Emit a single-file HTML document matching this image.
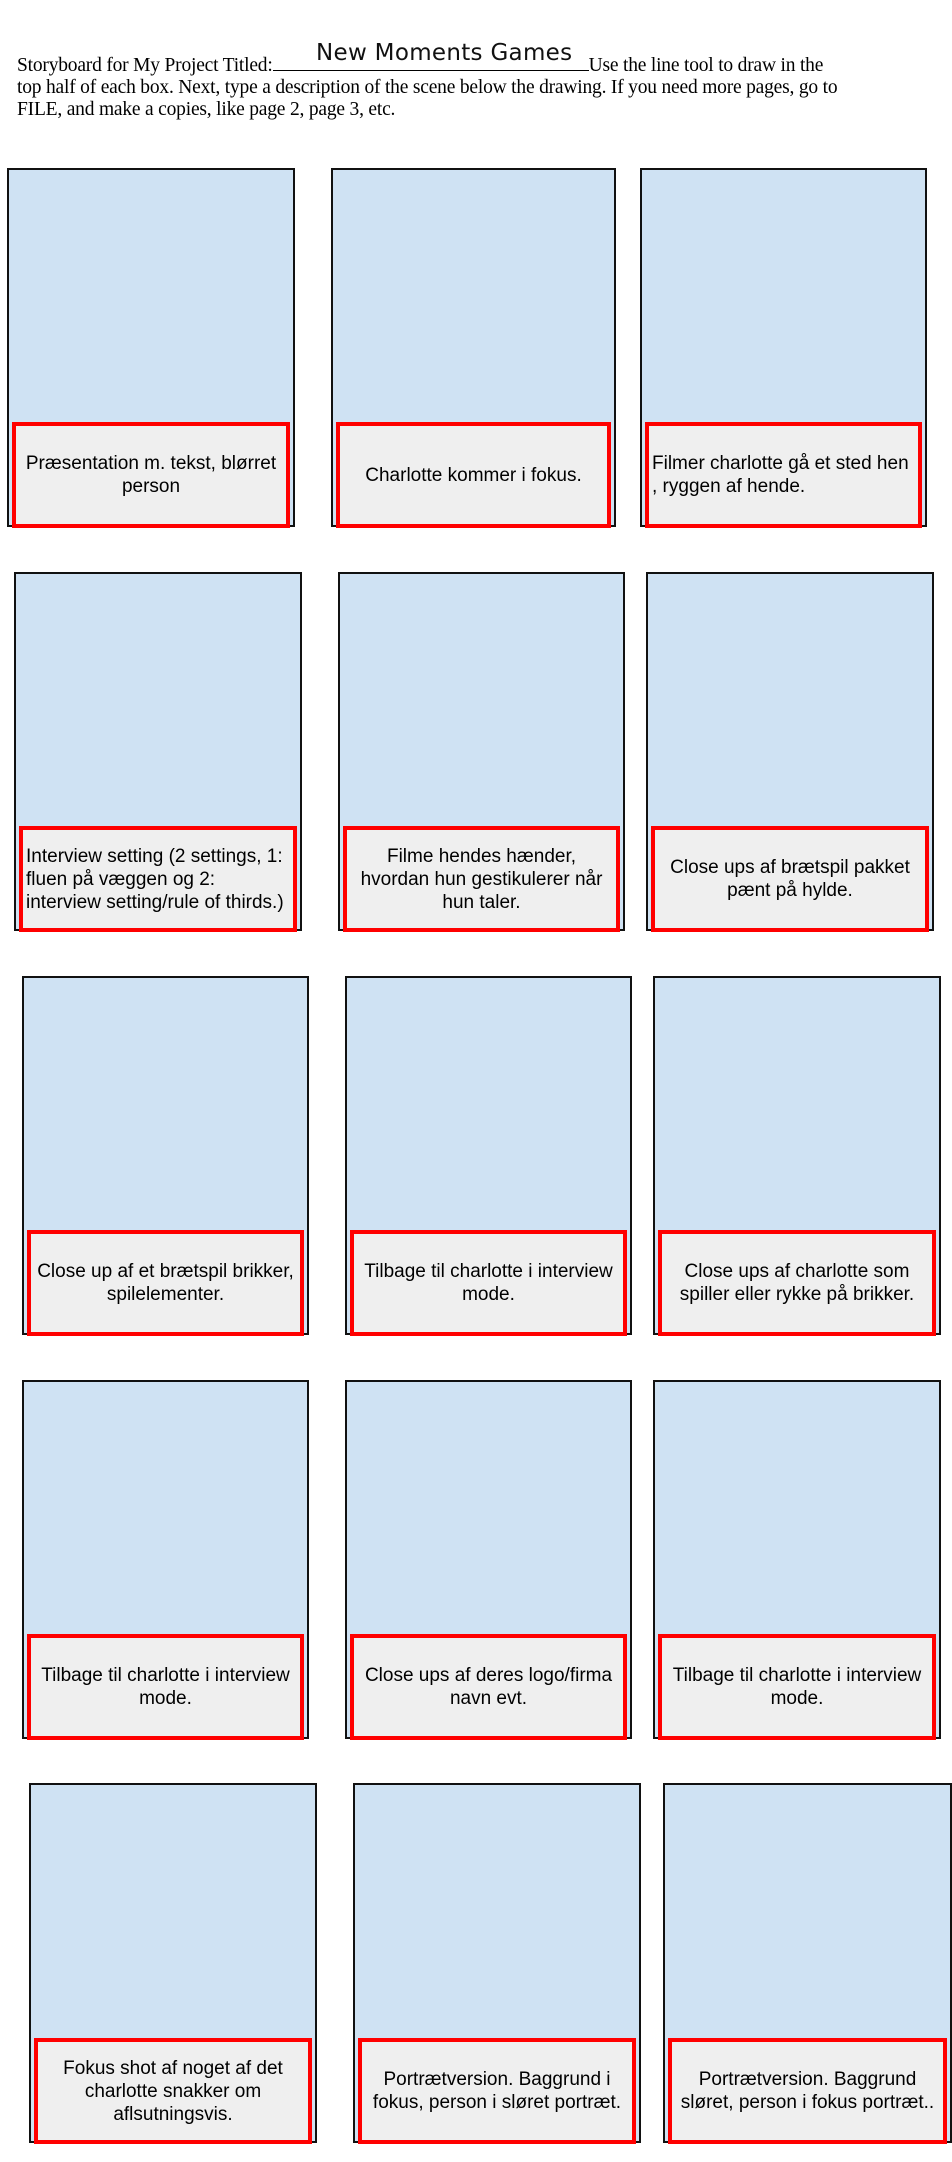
<!DOCTYPE html>
<html><head><meta charset="utf-8"><style>
body{margin:0;width:952px;height:2162px;background:#fff;position:relative;overflow:hidden;font-family:"Liberation Sans",Arial,sans-serif}
.hdr{position:absolute;left:17px;top:52px;width:850px;font-family:"Liberation Serif","Times New Roman",serif;font-size:19.5px;line-height:22px;color:#000;letter-spacing:-0.2px}
.u{display:inline-block;width:316px;border-bottom:1px solid #000;height:18px;vertical-align:baseline}
.title{position:absolute;left:316px;top:40px;font-family:"DejaVu Sans",sans-serif;font-size:23px;color:#111;letter-spacing:.3px}
.b{position:absolute;background:#cfe2f3;border:2px solid #111;box-sizing:border-box}
.r{position:absolute;background:#efefef;border:4px solid #f00;box-sizing:border-box;display:flex;align-items:center;justify-content:center;text-align:center;font-size:19px;line-height:23px;color:#000;padding:0 3px}
</style></head><body>
<div class="hdr">Storyboard for My Project Titled:<span class="u"></span>Use the line tool to draw in the<br>top half of each box. Next, type a description of the scene below the drawing. If you need more pages, go to<br>FILE, and make a copies, like page 2, page 3, etc.</div>
<div class="title">New Moments Games</div>

<div class="b" style="left:7px;top:168px;width:288px;height:359px"></div>
<div class="r" style="left:12px;top:422px;width:278px;height:106px">Præsentation m. tekst, blørret person</div>
<div class="b" style="left:331px;top:168px;width:285px;height:359px"></div>
<div class="r" style="left:336px;top:422px;width:275px;height:106px">Charlotte kommer i fokus.</div>
<div class="b" style="left:640px;top:168px;width:287px;height:359px"></div>
<div class="r" style="left:645px;top:422px;width:277px;height:106px;text-align:left;justify-content:flex-start">Filmer charlotte gå et sted hen , ryggen af hende.</div>

<div class="b" style="left:14px;top:572px;width:288px;height:359px"></div>
<div class="r" style="left:19px;top:826px;width:278px;height:106px;text-align:left;justify-content:flex-start">Interview setting (2 settings, 1: fluen på væggen og 2: interview setting/rule of thirds.)</div>
<div class="b" style="left:338px;top:572px;width:287px;height:359px"></div>
<div class="r" style="left:343px;top:826px;width:277px;height:106px"><span>Filme hendes hænder,<br>hvordan hun gestikulerer når<br>hun taler.</span></div>
<div class="b" style="left:646px;top:572px;width:288px;height:359px"></div>
<div class="r" style="left:651px;top:826px;width:278px;height:106px">Close ups af brætspil pakket pænt på hylde.</div>

<div class="b" style="left:22px;top:976px;width:287px;height:359px"></div>
<div class="r" style="left:27px;top:1230px;width:277px;height:106px">Close up af et brætspil brikker, spilelementer.</div>
<div class="b" style="left:345px;top:976px;width:287px;height:359px"></div>
<div class="r" style="left:350px;top:1230px;width:277px;height:106px">Tilbage til charlotte i interview mode.</div>
<div class="b" style="left:653px;top:976px;width:288px;height:359px"></div>
<div class="r" style="left:658px;top:1230px;width:278px;height:106px">Close ups af charlotte som spiller eller rykke på brikker.</div>

<div class="b" style="left:22px;top:1380px;width:287px;height:359px"></div>
<div class="r" style="left:27px;top:1634px;width:277px;height:106px">Tilbage til charlotte i interview mode.</div>
<div class="b" style="left:345px;top:1380px;width:287px;height:359px"></div>
<div class="r" style="left:350px;top:1634px;width:277px;height:106px">Close ups af deres logo/firma navn evt.</div>
<div class="b" style="left:653px;top:1380px;width:288px;height:359px"></div>
<div class="r" style="left:658px;top:1634px;width:278px;height:106px">Tilbage til charlotte i interview mode.</div>

<div class="b" style="left:29px;top:1783px;width:288px;height:360px"></div>
<div class="r" style="left:34px;top:2038px;width:278px;height:106px">Fokus shot af noget af det charlotte snakker om aflsutningsvis.</div>
<div class="b" style="left:353px;top:1783px;width:288px;height:360px"></div>
<div class="r" style="left:358px;top:2038px;width:278px;height:106px">Portrætversion. Baggrund i fokus, person i sløret portræt.</div>
<div class="b" style="left:663px;top:1783px;width:289px;height:360px"></div>
<div class="r" style="left:668px;top:2038px;width:279px;height:106px">Portrætversion. Baggrund sløret, person i fokus portræt..</div>
</body></html>
